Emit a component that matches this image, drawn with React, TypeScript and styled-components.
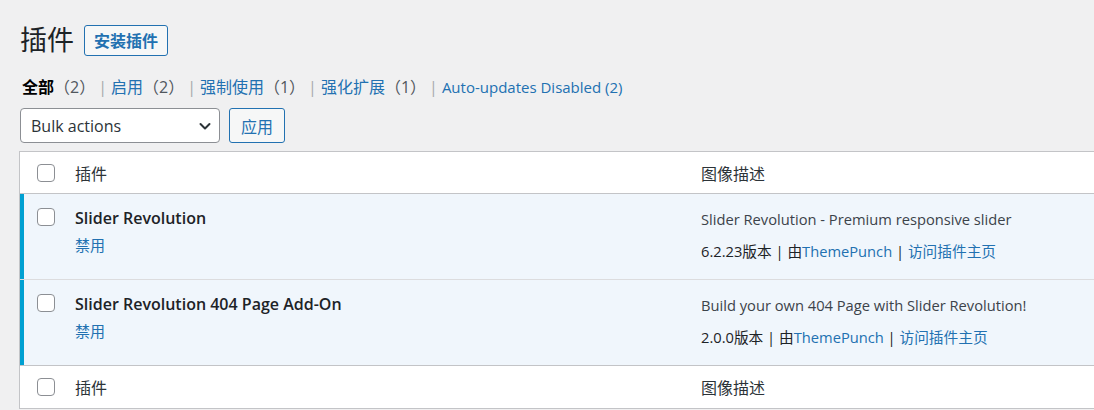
import React from "react";
import styled, { createGlobalStyle } from "styled-components";

const GlobalStyle = createGlobalStyle`
  html, body {
    margin: 0;
    padding: 0;
    background: #f0f0f1;
    overflow: hidden;
  }
  body {
    font-family: "Open Sans", "Noto Sans CJK SC", sans-serif;
    font-size: 15px;
    color: #3c434a;
  }
`;

const Wrap = styled.div`
  padding: 23px 0 0 20px;
`;

const TitleBar = styled.div`
  display: flex;
  align-items: center;
  height: 34px;
`;

const Title = styled.h1`
  margin: 0;
  font-size: 27px;
  font-weight: 400;
  line-height: 34px;
  color: #1d2327;
`;

const OutlineButton = styled.button<{ $bold?: boolean }>`
  height: ${(p) => (p.$bold ? "31px" : "35px")};
  padding: 0 ${(p) => (p.$bold ? "9px" : "11px")};
  margin-left: ${(p) => (p.$bold ? "10px" : "9px")};
  border: 1px solid #2271b1;
  border-radius: 3px;
  background: #f6f7f7;
  color: #2271b1;
  font-family: inherit;
  font-size: 16px;
  font-weight: ${(p) => (p.$bold ? 700 : 400)};
  cursor: pointer;
`;

const Filters = styled.ul`
  display: flex;
  margin: 19px 0 0;
  padding: 0 0 0 2px;
  list-style: none;
  line-height: 22px;
  height: 22px;
  font-size: 16px;
`;

const FilterItem = styled.li`
  white-space: pre;
`;

const FilterLink = styled.a<{ $current?: boolean; $latin?: boolean }>`
  color: ${(p) => (p.$current ? "#000" : "#2271b1")};
  font-weight: ${(p) => (p.$current ? 700 : 400)};
  font-size: ${(p) => (p.$latin ? "15px" : "16px")};
  text-decoration: none;
`;

const Count = styled.span<{ $link?: boolean }>`
  color: ${(p) => (p.$link ? "#2271b1" : "#50575e")};
  font-weight: 400;
`;

const Sep = styled.span`
  color: #a7aaad;
  margin: 0 4px 0 3px;
`;

const Toolbar = styled.div`
  display: flex;
  align-items: center;
  margin-top: 10px;
  height: 35px;
`;

const Select = styled.div`
  box-sizing: border-box;
  width: 200px;
  height: 35px;
  display: flex;
  align-items: center;
  justify-content: space-between;
  padding: 0 6px 0 10px;
  background: #fff;
  border: 1px solid #8c8f94;
  border-radius: 4px;
  color: #2c3338;
  font-size: 16px;
`;

const Table = styled.div`
  margin: 8px 0 0 -1px;
  width: calc(100% + 40px);
  background: #fff;
  border: 1px solid #c3c4c7;
  border-right: none;
`;

const Row = styled.div<{ $active?: boolean; $head?: boolean; $foot?: boolean }>`
  display: grid;
  grid-template-columns: 55px 626px 1fr;
  min-height: ${(p) => (p.$active ? "85px" : p.$foot ? "42px" : "41px")};
  background: ${(p) => (p.$active ? "#f0f6fc" : "#fff")};
  border-bottom: ${(p) =>
    p.$head ? "1px solid #c3c4c7" : p.$active ? "1px solid #dcdcde" : "none"};
  border-top: ${(p) => (p.$foot ? "1px solid #c3c4c7" : "none")};
  &:nth-last-child(2) {
    border-bottom: none;
  }
`;

const CheckCell = styled.div<{ $active?: boolean; $plain?: boolean }>`
  box-sizing: border-box;
  display: flex;
  align-items: ${(p) => (p.$plain ? "center" : "flex-start")};
  padding-left: ${(p) => (p.$active ? "13px" : "17px")};
  padding-top: ${(p) => (p.$plain ? "0" : "14px")};
  border-left: ${(p) => (p.$active ? "4px solid #00a0d2" : "none")};
`;

const Box = styled.span`
  box-sizing: border-box;
  width: 18px;
  height: 18px;
  background: #fff;
  border: 1px solid #8c8f94;
  border-radius: 4px;
`;

const HeadCell = styled.div`
  display: flex;
  align-items: center;
  color: #2c3338;
  font-size: 16px;
`;

const NameCell = styled.div`
  padding-top: 13px;
  line-height: 22px;
`;

const PluginName = styled.strong`
  display: block;
  color: #1d2327;
  font-weight: 600;
  font-size: 16px;
`;

const Actions = styled.div`
  margin-top: 5px;
`;

const Link = styled.a`
  color: #2271b1;
  text-decoration: none;
`;

const DescCell = styled.div`
  padding-top: 14px;
  line-height: 22px;
  font-size: 14.7px;
`;

const Desc = styled.p`
  margin: 0;
  color: #3c434a;
`;

const Meta = styled.div`
  margin-top: 10px;
  color: #1d2327;
`;

const Chevron = () => (
  <svg width="16" height="16" viewBox="0 0 16 16" fill="none">
    <path d="M3.5 6 L8 10.5 L12.5 6" stroke="#2c3338" strokeWidth="2" strokeLinecap="round" strokeLinejoin="round" />
  </svg>
);

const filters = [
  { label: "全部", count: "（2）", current: true },
  { label: "启用", count: "（2）" },
  { label: "强制使用", count: "（1）" },
  { label: "强化扩展", count: "（1）" },
  { label: "Auto-updates Disabled", count: " (2)", latin: true },
];

const plugins = [
  {
    name: "Slider Revolution",
    desc: "Slider Revolution - Premium responsive slider",
    version: "6.2.23",
  },
  {
    name: "Slider Revolution 404 Page Add-On",
    desc: "Build your own 404 Page with Slider Revolution!",
    version: "2.0.0",
  },
];

export default function App() {
  return (
    <>
      <GlobalStyle />
      <Wrap>
        <TitleBar>
          <Title>插件</Title>
          <OutlineButton $bold>安装插件</OutlineButton>
        </TitleBar>

        <Filters>
          {filters.map((f, i) => (
            <FilterItem key={f.label}>
              {i > 0 && <Sep>|</Sep>}
              <FilterLink $current={f.current} $latin={f.latin} href="#">
                {f.label}
                <Count $link={f.latin}>{f.count}</Count>
              </FilterLink>
            </FilterItem>
          ))}
        </Filters>

        <Toolbar>
          <Select>
            <span>Bulk actions</span>
            <Chevron />
          </Select>
          <OutlineButton>应用</OutlineButton>
        </Toolbar>

        <Table>
          <Row $head>
            <CheckCell $plain>
              <Box />
            </CheckCell>
            <HeadCell>插件</HeadCell>
            <HeadCell>图像描述</HeadCell>
          </Row>
          {plugins.map((p) => (
            <Row $active key={p.name}>
              <CheckCell $active>
                <Box />
              </CheckCell>
              <NameCell>
                <PluginName>{p.name}</PluginName>
                <Actions>
                  <Link href="#">禁用</Link>
                </Actions>
              </NameCell>
              <DescCell>
                <Desc>{p.desc}</Desc>
                <Meta>
                  {p.version}版本 | 由<Link href="#">ThemePunch</Link> | <Link href="#">访问插件主页</Link>
                </Meta>
              </DescCell>
            </Row>
          ))}
          <Row $foot>
            <CheckCell $plain>
              <Box />
            </CheckCell>
            <HeadCell>插件</HeadCell>
            <HeadCell>图像描述</HeadCell>
          </Row>
        </Table>
      </Wrap>
    </>
  );
}
